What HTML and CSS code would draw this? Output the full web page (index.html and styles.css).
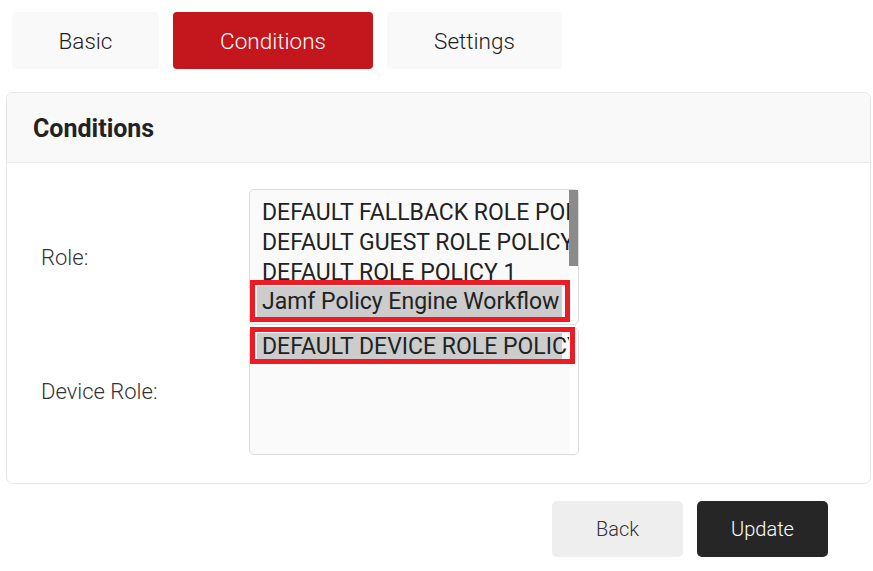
FILE: index.html
```html
<!DOCTYPE html>
<html>
<head>
<meta charset="utf-8">
<link rel="stylesheet" href="styles.css">
</head>
<body>
<div class="page">
  <nav class="tabs">
    <div class="tab tab-basic">Basic</div>
    <div class="tab tab-conditions active">Conditions</div>
    <div class="tab tab-settings">Settings</div>
  </nav>
  <section class="card">
    <header class="card-header">Conditions</header>
    <div class="card-body">
      <div class="label">Role:</div>
      <div class="listbox listbox-role">
        <div class="list-content">
          <div class="option">DEFAULT FALLBACK ROLE POLICY</div>
          <div class="option">DEFAULT GUEST ROLE POLICY</div>
          <div class="option">DEFAULT ROLE POLICY 1</div>
          <div class="option selected">Jamf Policy Engine Workflow</div>
        </div>
        <div class="scrollbar"><div class="thumb"></div></div>
        <span class="mark mark-role"></span>
      </div>
      <div class="label">Device Role:</div>
      <div class="listbox listbox-device">
        <div class="list-content">
          <div class="option selected">DEFAULT DEVICE ROLE POLICY</div>
        </div>
        <div class="scrollbar"></div>
        <span class="mark mark-device"></span>
      </div>
    </div>
  </section>
  <div class="actions">
    <button class="btn btn-back">Back</button>
    <button class="btn btn-update">Update</button>
  </div>
</div>
</body>
</html>
```

FILE: styles.css
```css
* { box-sizing: border-box; }
html, body { margin: 0; padding: 0; background: #fff; }
body { font-family: Roboto, "Noto Sans", sans-serif; color: #222; }
.page { padding: 12px 3px 0 6px; width: 873px; }

.tabs { display: flex; gap: 14px; padding-left: 6px; height: 57px; }
.tab {
  height: 57px; display: flex; align-items: center; justify-content: center;
  background: #f9f9f9; border-radius: 4px; font-size: 22.5px; font-weight: 300; color: #1e1e1e;
}
.tab-basic { width: 147px; }
.tab-conditions { width: 200px; }
.tab-settings { width: 175px; }
.tab.active { background: #c3161d; color: #fff; }

.card {
  margin-top: 23px; width: 865px; border: 1px solid #e6e6e6; border-radius: 7px;
  overflow: hidden;
}
.card-header {
  height: 70px; background: #f9f9f9; border-bottom: 1px solid #ececec;
  display: flex; align-items: center; padding-left: 26px; padding-top: 1px;
  font-size: 25px; font-weight: 700; color: #222;
}
.card-body {
  display: grid; grid-template-columns: 208px 330px; row-gap: 2px;
  padding: 26px 0 28px 34px; align-items: center;
}
.label { font-size: 22px; color: #333; font-weight: 300; }

.listbox {
  position: relative; display: flex; border: 1px solid #dcdcdc; border-radius: 5px;
  background: #fafafa; width: 330px;
}
.listbox-role { height: 136px; }
.listbox-device { height: 128px; }
.list-content { flex: 1; overflow: hidden; padding: 8px 7px 7px; }
.listbox-device .list-content { padding-top: 5px; }
.option {
  height: 30px; line-height: 30px; padding-left: 5px; white-space: nowrap;
  font-size: 23px; color: #222;
}
.listbox-role .option.selected { height: 31px; line-height: 31px; margin-top: -2px; }
.listbox-device .option { height: 27px; line-height: 28px; }
.option.selected { background: #cccccc; }
.scrollbar { width: 9px; background: #fff; border-radius: 0 5px 5px 0; }
.thumb { height: 76px; background: #8b8b8b; }

.mark { position: absolute; border: 5px solid #ed1c24; pointer-events: none; }
.mark-role { left: 0; top: 90px; width: 320px; height: 42px; }
.mark-device { left: 0; top: -1px; width: 325px; height: 37px; }

.actions { display: flex; justify-content: flex-end; gap: 14px; margin-top: 17px; padding-right: 42px; }
.btn {
  width: 131px; height: 56px; border: none; border-radius: 5px; font-family: inherit;
  font-size: 20px; font-weight: 300;
}
.btn-back { background: #eeeeee; color: #333; }
.btn-update { background: #262626; color: #fff; }
```
